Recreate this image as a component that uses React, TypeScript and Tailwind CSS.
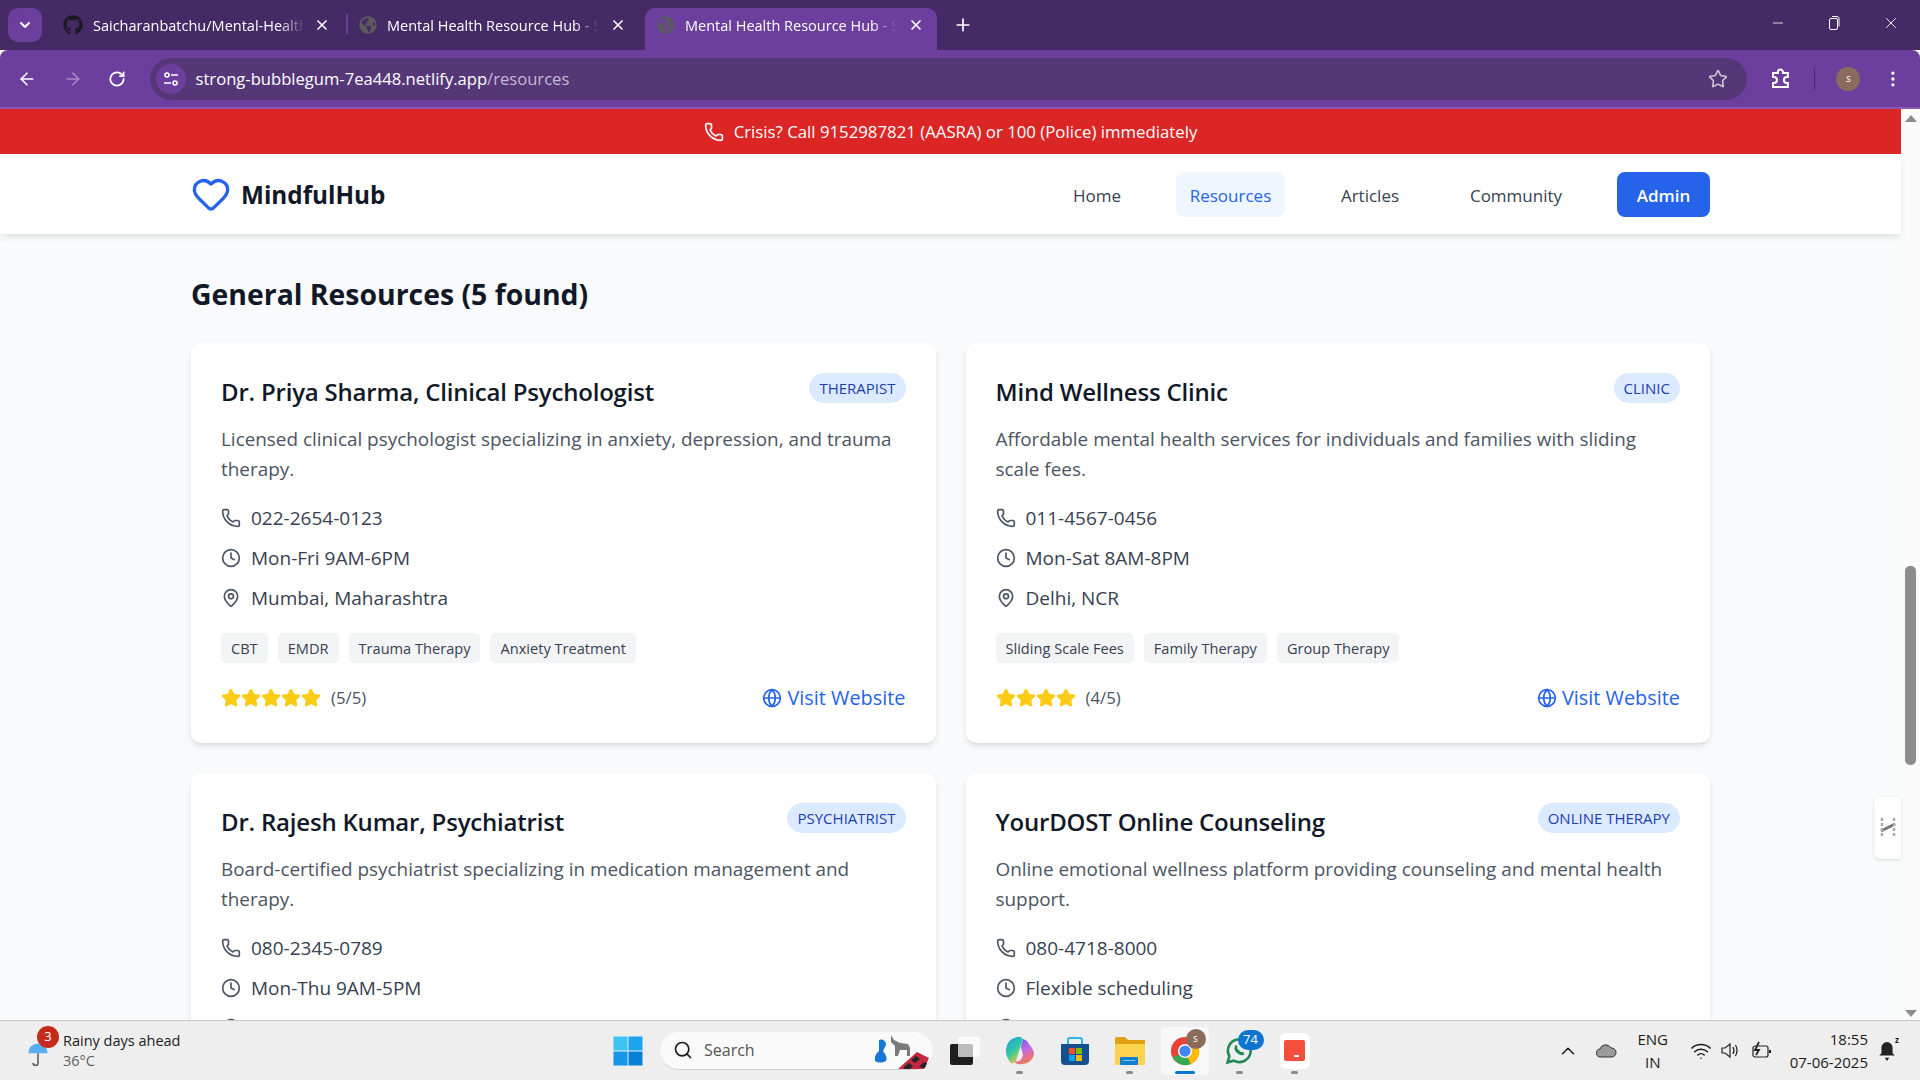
import { Clock, Globe, Heart, MapPin, Phone, Star, ArrowLeft, ArrowRight, RotateCw, X, Plus, ChevronDown, Minus, EllipsisVertical, Search, ChevronUp, Wifi } from "lucide-react";
import { FaGithub, FaGlobeAmericas } from "react-icons/fa";
import type { ReactNode } from "react";

type Resource = {
  title: string;
  badge: string;
  description: string;
  phone: string;
  hours: string;
  place: string;
  tags: string[];
  rating: number;
};

const resources: Resource[] = [
  {
    title: "Dr. Priya Sharma, Clinical Psychologist",
    badge: "THERAPIST",
    description: "Licensed clinical psychologist specializing in anxiety, depression, and trauma therapy.",
    phone: "022-2654-0123",
    hours: "Mon-Fri 9AM-6PM",
    place: "Mumbai, Maharashtra",
    tags: ["CBT", "EMDR", "Trauma Therapy", "Anxiety Treatment"],
    rating: 5
  },
  {
    title: "Mind Wellness Clinic",
    badge: "CLINIC",
    description: "Affordable mental health services for individuals and families with sliding scale fees.",
    phone: "011-4567-0456",
    hours: "Mon-Sat 8AM-8PM",
    place: "Delhi, NCR",
    tags: ["Sliding Scale Fees", "Family Therapy", "Group Therapy"],
    rating: 4
  },
  {
    title: "Dr. Rajesh Kumar, Psychiatrist",
    badge: "PSYCHIATRIST",
    description: "Board-certified psychiatrist specializing in medication management and therapy.",
    phone: "080-2345-0789",
    hours: "Mon-Thu 9AM-5PM",
    place: "Bangalore, Karnataka",
    tags: [],
    rating: 5
  },
  {
    title: "YourDOST Online Counseling",
    badge: "ONLINE THERAPY",
    description: "Online emotional wellness platform providing counseling and mental health support.",
    phone: "080-4718-8000",
    hours: "Flexible scheduling",
    place: "Online",
    tags: [],
    rating: 4
  }
];

const ResourceCard = ({ resource }: { resource: Resource }) => (
  <article className="h-[400px] shrink-0 rounded-[10px] bg-white p-[30px] shadow-[0_4px_7px_-1px_rgba(0,0,0,0.1),0_2px_4px_-2px_rgba(0,0,0,0.1)]">
    <div className="mb-[13px] flex items-start justify-between">
      <h3 className="text-[24px] leading-[38px] font-semibold tracking-[-0.2px] text-[#111827]">{resource.title}</h3>
      <span className="rounded-full bg-[#dbeafe] px-[10px] text-[15px] leading-[30px] font-medium text-[#1e40af]">
        {resource.badge}
      </span>
    </div>
    <p className="mb-[19px] text-[18.9px] leading-[30px] text-[#4b5563]">{resource.description}</p>
    <div className="mb-[20px] flex flex-col gap-[10px] text-[19px] leading-[30px] text-[#374151]">
      <div className="flex items-center gap-[10px]">
        <Phone className="size-5 text-[#4b5563]" />
        <span>{resource.phone}</span>
      </div>
      <div className="flex items-center gap-[10px]">
        <Clock className="size-5 text-[#4b5563]" />
        <span>{resource.hours}</span>
      </div>
      <div className="flex items-center gap-[10px]">
        <MapPin className="size-5 text-[#4b5563]" />
        <span>{resource.place}</span>
      </div>
    </div>
    <div className="mb-[20px] flex h-[30px] gap-[10px]">
      {resource.tags.map((tag) => (
        <span className="rounded-[5px] bg-[#f3f4f6] px-[10px] text-[14.6px] leading-[30px] text-[#374151]" key={tag}>
          {tag}
        </span>
      ))}
    </div>
    <div className="flex items-center justify-between">
      <div className="flex items-center gap-[10px]">
        <div className="flex">
          {Array.from({ length: resource.rating }).map((_, index) => (
            <Star className="size-5 fill-[#facc15] text-[#facc15]" key={index} />
          ))}
        </div>
        <span className="text-[16.8px] leading-[30px] text-[#4b5563]">({resource.rating}/5)</span>
      </div>
      <a className="flex items-center gap-[5px] text-[19.9px] leading-[30px] font-medium text-[#2563eb]">
        <Globe className="size-5" />
        Visit Website
      </a>
    </div>
  </article>
);

const NavBar = () => (
  <header className="relative z-10 flex h-[80px] shrink-0 items-center justify-between bg-white px-[191px] shadow-[0_4px_7px_-1px_rgba(0,0,0,0.1)]">
    <div className="flex items-center gap-[10px]">
      <Heart className="size-[40px] text-[#2563eb]" />
      <span className="pt-[3px] text-[24.3px] font-bold text-[#111827]">MindfulHub</span>
    </div>
    <nav className="flex items-center gap-[40px] text-[17px] font-medium text-[#374151]">
      <a className="h-[45px] w-[78px] text-center leading-[47px]">Home</a>
      <a className="h-[45px] w-[109px] rounded-[8px] bg-[#eff6ff] text-center leading-[47px] text-[#2563eb]">Resources</a>
      <a className="h-[45px] w-[90px] text-center leading-[47px]">Articles</a>
      <a className="h-[45px] w-[122px] text-center leading-[47px]">Community</a>
      <a className="h-[45px] w-[93px] rounded-[8px] bg-[#2563eb] text-center leading-[47px] font-semibold text-white">Admin</a>
    </nav>
  </header>
);

const BrowserTab = ({ title, active, github }: { title: string; active?: boolean; github?: boolean }) => (
  <div className={`mx-[3px] flex h-[42px] w-[292px] shrink-0 items-center rounded-t-[10px] pb-[8px] ${github ? "pr-[17px] pl-[8px]" : "pr-[13px] pl-[12px]"} ${active ? "bg-[#6c3f9e]" : ""}`}>
    {github ? (
      <FaGithub className="size-[20px] shrink-0 text-[#1b1a20]" />
    ) : (
      <FaGlobeAmericas className="size-[18px] shrink-0 text-[#5a5a60]" />
    )}
    <span className="ml-[10px] w-[212px] overflow-hidden pt-[1px] text-[14.5px] whitespace-nowrap text-white [mask-image:linear-gradient(to_right,black_88%,transparent)]">
      {title}
    </span>
    <X className="ml-auto size-[16px] shrink-0 text-white" strokeWidth={2.5} />
  </div>
);

const BrowserChrome = () => (
  <div className="shrink-0 font-['Open_Sans',sans-serif]">
    <div className="flex h-[50px] items-end bg-[#452b66] pl-[8px]">
      <div className="mb-[8px] flex size-[34px] items-center justify-center rounded-[10px] bg-[#6c3f9e]">
        <ChevronDown className="size-4 text-white" strokeWidth={3} />
      </div>
      <div className="ml-[10px] flex items-end">
        <BrowserTab github title="Saicharanbatchu/Mental-Health" />
        <div className="mx-[-4px] mb-[16px] h-[20px] w-[2px] bg-[#6c3f9e]" />
        <BrowserTab title="Mental Health Resource Hub - S" />
        <BrowserTab active title="Mental Health Resource Hub - S" />
      </div>
      <Plus className="mb-[15px] ml-[13px] size-[20px] text-white" />
      <div className="mb-[18px] ml-auto flex items-center gap-[40px] pr-[20px] text-white">
        <Minus className="size-[16px]" strokeWidth={1.2} />
        <svg className="size-[16px]" fill="none" stroke="currentColor" viewBox="0 0 16 16">
          <rect height="11" rx="1.5" width="8" x="3.5" y="3.5" />
          <path d="M6 1.5 h5 a2 2 0 0 1 2 2 v8" />
        </svg>
        <X className="size-[18px]" strokeWidth={1.2} />
      </div>
    </div>
    <div className="flex h-[59px] items-center rounded-t-[8px] border-b-2 border-[#8a55b0] bg-[#6c3f9e] pr-[17px] pl-[17px]">
      <ArrowLeft className="size-[20px] text-white" />
      <ArrowRight className="ml-[26px] size-[20px] text-[#a78bc4]" />
      <RotateCw className="ml-[25px] size-[18px] text-white" strokeWidth={2.4} />
      <div className="ml-[24px] flex h-[42px] w-[1597px] shrink-0 items-center rounded-full bg-[#553777] pr-[19px] pl-[6px]">
        <div className="flex size-[30px] items-center justify-center rounded-full bg-[#6c3f9e]">
          <svg className="size-[16px]" fill="none" stroke="#fff" strokeWidth="1.6" viewBox="0 0 16 16">
            <circle cx="4" cy="4" r="2" />
            <path d="M8 4 h7 M1 12 h7" />
            <circle cx="12" cy="12" r="2" />
          </svg>
        </div>
        <span className="ml-[10px] pt-[2px] text-[16.6px] text-white">
          strong-bubblegum-7ea448.netlify.app<span className="text-[#c5b8d4]">/resources</span>
        </span>
        <Star className="ml-auto size-[20px] text-[#c8c0d0]" />
      </div>
      <svg className="ml-[23px] size-[22px]" fill="none" stroke="#fff" strokeWidth="2" viewBox="0 0 22 22">
        <path d="M3 5 h5 v-1 a2.5 2.5 0 0 1 5 0 v1 h5 v4 h-1 a2.5 2.5 0 0 0 0 6 h1 v4 h-15 v-4 h1 a2.5 2.5 0 0 0 0-6 h-1 Z" />
      </svg>
      <div className="ml-[23px] h-[22px] w-px bg-[#452b66]" />
      <div className="ml-[21px] flex size-[24px] items-center justify-center rounded-full bg-[#8a6b5c] text-[10px] text-white">
        s
      </div>
      <EllipsisVertical className="ml-[23px] size-[20px] text-white" />
    </div>
  </div>
);

const Scrollbar = () => (
  <div className="flex w-[19px] shrink-0 flex-col items-center bg-[#fbfbfb]">
    <div className="mt-[6px] h-0 w-0 border-x-[6px] border-b-[7px] border-x-transparent border-b-[#8c8c8c]" />
    <div className="mt-[444px] h-[199px] w-[11px] rounded-[5px] bg-[#8c8c8c]" />
    <div className="mt-auto mb-[3px] h-0 w-0 border-x-[6px] border-t-[7px] border-x-transparent border-t-[#8c8c8c]" />
  </div>
);

const WindowsLogo = () => (
  <svg className="size-[30px]" viewBox="0 0 30 30">
    <rect fill="#3cc4f5" height="14" width="14" x="0.5" y="0.5" />
    <rect fill="#1ba5ee" height="14" width="14" x="15.5" y="0.5" />
    <rect fill="#1596e6" height="14" width="14" x="0.5" y="15.5" />
    <rect fill="#0a7fd8" height="14" width="14" x="15.5" y="15.5" />
  </svg>
);

const TaskIcon = ({ children, dot }: { children: ReactNode; dot?: boolean }) => (
  <div className="relative flex h-[60px] w-[55px] shrink-0 items-center justify-center">
    {children}
    {dot && <span className="absolute bottom-[7px] h-[3px] w-[7px] rounded-full bg-[#8a8a8a]" />}
  </div>
);

const Taskbar = () => (
  <footer className="flex h-[60px] shrink-0 items-center border-t border-[#c9c9c9] bg-[#eeeeee] font-['Open_Sans',sans-serif] text-[#1c1c1c]">
    <div className="flex w-[613px] shrink-0 items-center pl-[25px]">
      <div className="relative mt-[6px] size-[26px]">
        <svg className="size-[26px]" viewBox="0 0 26 32">
          <path d="M1 15 A12 12 0 0 1 25 15 Z" fill="#5aaef0" />
          <path d="M13 15 V27 a3 3 0 0 1-6 0" fill="none" stroke="#555" strokeWidth="1.8" />
        </svg>
        <span className="absolute top-[-15px] left-[12px] flex size-[22px] items-center justify-center rounded-full bg-[#c42b1c] text-[13px] text-white">
          3
        </span>
      </div>
      <div className="ml-[12px] flex flex-col text-[14.5px] leading-[20px]">
        <span>Rainy days ahead</span>
        <span className="text-[#5f5f5f]">36°C</span>
      </div>
    </div>
    <WindowsLogo />
    <div className="ml-[17px] flex h-[38px] w-[273px] shrink-0 items-center rounded-full border-b border-[#cfcfcf] bg-[#fafafa] pl-[13px]">
      <Search className="size-[20px]" />
      <span className="ml-[11px] text-[16px] text-[#555]">Search</span>
      <svg className="mr-[2px] ml-auto h-[38px] w-[60px]" viewBox="0 0 60 38">
        <path d="M8 9 a5 5 0 0 1 7 5 l-3 6 q5 6 3 10 q-6 3-11 0 q-1-6 4-10 Z" fill="#1478d4" />
        <path d="M20 4 l3 5 l6 3 l8 1 l2 4 v8 h-3 v-6 h-7 l-2 6 h-3 v-10 l-4-4 Z" fill="#7a7a7a" />
        <path d="M27 38 L46 21 L58 27 L53 38 Z" fill="#c4283c" />
        <path d="M40 29 l5-4 l4 3 l-5 4 Z M33 36 l5-4 l4 3 l-3 3 h-6 Z M48 36 l5-5 l3 1 l-2 5 Z" fill="#26232a" />
      </svg>
    </div>
    <div className="ml-[4px] flex">
      <TaskIcon>
        <svg className="size-[30px]" viewBox="0 0 30 30">
          <rect fill="#1e1e1e" height="21" rx="2" width="23" y="8" />
          <rect fill="#ffffff" fillOpacity="0.7" height="20" rx="1" width="22" x="8" y="1" />
        </svg>
      </TaskIcon>
      <TaskIcon dot>
        <svg className="size-[30px]" viewBox="0 0 30 30">
          <defs>
            <linearGradient id="copilotLeft" x1="0" x2="0.6" y1="0" y2="1">
              <stop offset="0" stopColor="#1d9be8" />
              <stop offset="0.6" stopColor="#35c9a0" />
              <stop offset="1" stopColor="#f3c532" />
            </linearGradient>
            <linearGradient id="copilotRight" x1="0.3" x2="0.7" y1="0" y2="1">
              <stop offset="0" stopColor="#6a5ff0" />
              <stop offset="0.5" stopColor="#d06ae0" />
              <stop offset="1" stopColor="#f5793a" />
            </linearGradient>
          </defs>
          <path d="M9 2 q6-3 9 1 l-7 22 q-2 3-5 2 q-6-7-5-14 q1-8 8-11 Z" fill="url(#copilotLeft)" />
          <path d="M18 3 q4 1 6 5 q7 8 4 13 q-3 7-11 7 q-7 1-7-3 q6 2 8-6 l-2-8 Z" fill="url(#copilotRight)" />
        </svg>
      </TaskIcon>
      <TaskIcon>
        <svg className="size-[30px]" viewBox="0 0 30 30">
          <path d="M1 8 h28 v17 q0 4-4 4 h-20 q-4 0-4-4 Z" fill="#14508f" />
          <path d="M8 8 v-4 q0-2 2-2 h10 q2 0 2 2 v4" fill="none" stroke="#2fb6e8" strokeWidth="2" />
          <rect fill="#f25022" height="6" width="6" x="9" y="12" />
          <rect fill="#7fba00" height="6" width="6" x="16" y="12" />
          <rect fill="#00a4ef" height="6" width="6" x="9" y="19" />
          <rect fill="#ffb900" height="6" width="6" x="16" y="19" />
        </svg>
      </TaskIcon>
      <TaskIcon dot>
        <svg className="size-[30px]" viewBox="0 0 30 30">
          <path d="M0 3 q0-2 2-2 h8 l3 3 h17 v6 h-30 Z" fill="#e0a010" />
          <rect fill="#fcd34d" height="21" width="30" y="8" />
          <rect fill="#0f7fd0" height="8" rx="1" width="18" x="5" y="21" />
          <rect fill="#7cc4f0" height="1" width="12" x="8" y="24" />
        </svg>
      </TaskIcon>
      <TaskIcon>
        <div className="relative flex size-[48px] items-center justify-center rounded-[4px] bg-[#f8f8f8]">
          <svg className="size-[30px]" viewBox="0 0 32 32">
            <circle cx="16" cy="16" fill="#ea4335" r="15" />
            <path d="M16 16 L3 23 A15 15 0 0 0 22 30 Z" fill="#34a853" />
            <path d="M16 16 L22 30 A15 15 0 0 0 30 10 Z" fill="#fbbc04" />
            <circle cx="16" cy="16" fill="#fff" r="7.5" />
            <circle cx="16" cy="16" fill="#4285f4" r="6" />
          </svg>
          <span className="absolute top-[2px] right-[3px] flex size-[20px] items-center justify-center rounded-full bg-[#8a6b5c] text-[10px] text-white">
            s
          </span>
          <span className="absolute bottom-[1px] h-[3px] w-[20px] rounded-full bg-[#0078d4]" />
        </div>
      </TaskIcon>
      <TaskIcon dot>
        <div className="relative size-[30px]">
          <svg className="mt-[1px] size-[28px]" viewBox="0 0 32 32">
            <path d="M3 29 l2-7 a13 13 0 1 1 5 5 Z" fill="none" stroke="#1f8a55" strokeWidth="3" />
            <path d="M11 11 q-1 5 4 8 q4 3 7 1 l-1-3 l-3 0 l-4-4 l0-3 l-2-1 Z" fill="#1f8a55" />
          </svg>
          <span className="absolute top-[-6px] left-[13px] flex h-[20px] w-[26px] items-center justify-center rounded-full bg-[#0b74d1] text-[13px] text-white">
            74
          </span>
        </div>
      </TaskIcon>
      <TaskIcon dot>
        <div className="flex h-[36px] w-[30px] items-center justify-center rounded-[6px] bg-white">
          <div className="flex h-[21px] w-[21px] items-end justify-center rounded-[2px] bg-[#f44f3c] pb-[4px]">
            <div className="ml-[3px] h-[2px] w-[5px] bg-white" />
          </div>
        </div>
      </TaskIcon>
    </div>
    <div className="ml-auto flex items-center pr-[24px]">
      <ChevronUp className="size-[22px]" strokeWidth={1.6} />
      <svg className="ml-[17px] h-[15px] w-[21px]" viewBox="0 0 21 15">
        <path d="M5 14 a4 4 0 0 1-1-8 a6 6 0 0 1 11-1 a4.5 4.5 0 0 1 1 9 Z" fill="#9a9a9a" stroke="#333" />
      </svg>
      <div className="ml-[18px] flex w-[36px] flex-col items-center text-[15px] leading-[23px]">
        <span>ENG</span>
        <span>IN</span>
      </div>
      <Wifi className="ml-[19px] size-[22px]" strokeWidth={1.6} />
      <svg className="ml-[8px] size-[21px]" fill="none" stroke="#222" strokeWidth="1.2" viewBox="0 0 21 21">
        <path d="M2 8 h3 l5-4 v13 l-5-4 h-3 Z" />
        <path d="M13 7 q2 3.5 0 7 M15.5 5 q3 5.500 0 11" />
      </svg>
      <svg className="ml-[10px] size-[21px]" fill="none" stroke="#222" strokeWidth="1.2" viewBox="0 0 21 21">
        <rect height="11" rx="2" width="15" x="2" y="6" />
        <path d="M19 10 v3" strokeWidth="2" />
        <path d="M8 2 l-4 8 h4 l-3 5" strokeWidth="1.8" />
      </svg>
      <div className="ml-[18px] flex flex-col items-end text-[15px] leading-[23px]">
        <span>18:55</span>
        <span>07-06-2025</span>
      </div>
      <div className="relative ml-[10px] h-[20px] w-[18px]">
        <svg className="h-[20px] w-[18px]" viewBox="0 0 16 18">
          <path d="M8 1 a5 5 0 0 1 5 5 v5 l2 2 h-14 l2-2 v-5 a5 5 0 0 1 5-5 Z M6 15 h4 l-2 3 Z" fill="#222" />
        </svg>
        <span className="absolute top-[-5px] right-[-3px] text-[8px] leading-none font-bold">z</span>
      </div>
    </div>
  </footer>
);

const App = () => (
  <div className="flex h-screen w-full flex-col overflow-hidden font-['Open_Sans',sans-serif]">
    <BrowserChrome />
    <div className="flex min-h-0 flex-1">
      <div className="relative flex min-w-0 flex-1 flex-col bg-[#f9fafb]">
        <div className="flex h-[45px] shrink-0 items-center justify-center gap-[10px] bg-[#dc2626] text-[16.8px] text-white">
          <Phone className="size-5" />
          <span>Crisis? Call 9152987821 (AASRA) or 100 (Police) immediately</span>
        </div>
        <NavBar />
        <main className="min-h-0 flex-1 overflow-hidden px-[191px] pt-[41px]">
          <h2 className="mb-[30px] text-[28.4px] leading-[38px] font-bold text-[#111827]">General Resources (5 found)</h2>
          <div className="grid grid-cols-2 gap-[30px]">
            {resources.map((resource) => (
              <ResourceCard key={resource.title} resource={resource} />
            ))}
          </div>
        </main>
        <div className="absolute top-[688px] right-0 flex h-[62px] w-[27px] items-center justify-center rounded-l-[6px] bg-white shadow-[0_1px_3px_rgba(0,0,0,0.15)]">
          <svg className="h-[22px] w-[16px]" viewBox="0 0 16 22">
            <path d="M1 14 L15 7" stroke="#777" strokeWidth="3" />
            <path d="M2 1 V21 M14 1 V21" stroke="#aaa" strokeDasharray="3 2" strokeWidth="2.5" />
          </svg>
        </div>
      </div>
      <Scrollbar />
    </div>
    <Taskbar />
  </div>
);

export default App;
